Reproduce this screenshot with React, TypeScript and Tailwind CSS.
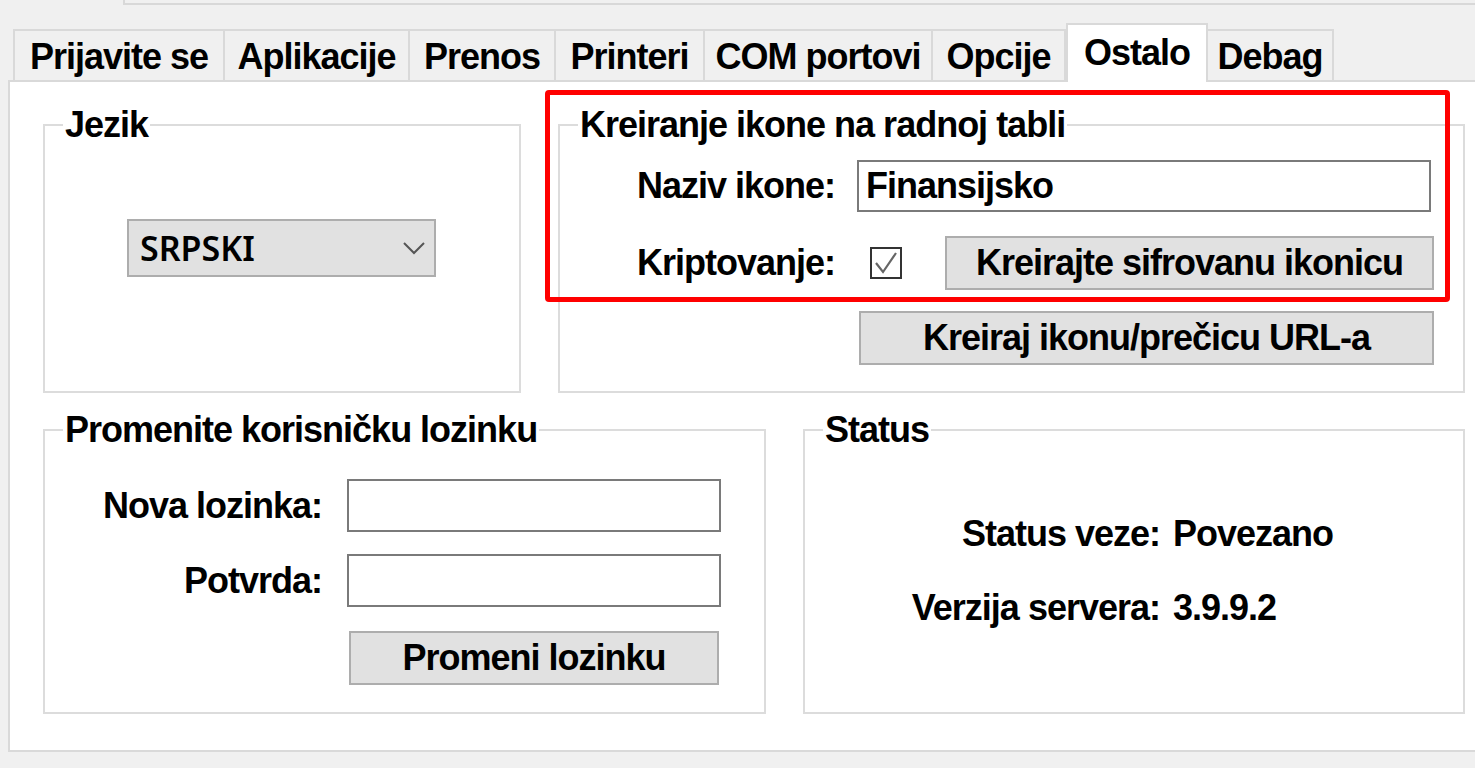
import React from 'react'

const TABS = [
  { label: 'Prijavite se', w: 'w-[212px]' },
  { label: 'Aplikacije', w: 'w-[185px]' },
  { label: 'Prenos', w: 'w-[146px]' },
  { label: 'Printeri', w: 'w-[149px]' },
  { label: 'COM portovi', w: 'w-[228px]' },
  { label: 'Opcije', w: 'w-[133px]' },
  { label: 'Ostalo', w: 'w-[142px]', active: true },
  { label: 'Debag', w: 'w-[126px]' },
]

function Group({ title, className, children }: { title: string; className: string; children?: React.ReactNode }) {
  return (
    <fieldset className={`border-2 border-[#dcdcdc] ${className}`}>
      <legend className="ml-[18px] px-[2px] leading-[40px]">{title}</legend>
      {children}
    </fieldset>
  )
}

function Btn({ label, className }: { label: string; className: string }) {
  return (
    <div className={`flex items-center justify-center bg-[#e1e1e1] border-2 border-[#adadad] ${className}`}>
      {label}
    </div>
  )
}

function TextBox({ value, className }: { value?: string; className: string }) {
  return (
    <div className={`flex items-center bg-white border-2 border-[#7a7a7a] pl-[7px] ${className}`}>
      {value}
    </div>
  )
}

export default function App() {
  return (
    <div className="relative w-[1475px] h-[768px] overflow-hidden bg-[#f0f0f0] text-black text-[36px] leading-[40px] font-bold tracking-[-1px] font-['Liberation_Sans',Arial,sans-serif]">
      {/* remains of the box above */}
      <div className="ml-[123px] h-[5px] border-l-2 border-b-2 border-[#d8d8d8]" />

      {/* tab strip */}
      <div className="mt-[18px] ml-[13px] flex items-end h-[57px]">
        {TABS.map((t) =>
          t.active ? (
            <div
              key={t.label}
              className={`${t.w} relative z-10 -mb-[2px] h-[59px] bg-white border-2 border-b-0 border-[#d9d9d9] flex items-start justify-center pt-[8px]`}
            >
              {t.label}
            </div>
          ) : (
            <div
              key={t.label}
              className={`${t.w} h-[51px] bg-[#f0f0f0] border-2 border-l-0 first:border-l-2 border-b-0 border-[#d9d9d9] flex items-center justify-center pt-[2px]`}
            >
              {t.label}
            </div>
          )
        )}
      </div>

      {/* panel */}
      <div className="ml-[8px] w-[1480px] h-[672px] bg-white border-2 border-[#d9d9d9] pl-[33px] pt-[23px]">
        <div className="flex gap-[37px]">
          <Group title="Jezik" className="w-[478px] h-[288px]">
            <div className="ml-[82px] mt-[74px] w-[309px] h-[58px] bg-[#e1e1e1] border-2 border-[#adadad] flex items-center justify-between pl-[11px] pr-[8px] font-['Noto_Sans',sans-serif] font-semibold tracking-normal text-[34px]">
              <span>SRPSKI</span>
              <svg width="24" height="14" viewBox="0 0 24 14" fill="none" stroke="#555" strokeWidth="2">
                <polyline points="2,2 12,12 22,2" />
              </svg>
            </div>
          </Group>

          <Group title="Kreiranje ikone na radnoj tabli" className="w-[907px] h-[288px]">
            <div className="flex items-center mt-[15px]">
              <div className="w-[275px] text-right">Naziv ikone:</div>
              <TextBox value="Finansijsko" className="ml-[22px] w-[574px] h-[52px]" />
            </div>
            <div className="flex items-center mt-[24px]">
              <div className="w-[275px] text-right">Kriptovanje:</div>
              <div className="ml-[35px] w-[32px] h-[32px] border-2 border-[#333] bg-white flex items-center justify-center">
                <svg width="26" height="26" viewBox="0 0 26 26" fill="none" stroke="#666" strokeWidth="2.2">
                  <polyline points="3,13 10,22 23,3" />
                </svg>
              </div>
              <Btn label="Kreirajte sifrovanu ikonicu" className="ml-[43px] w-[489px] h-[54px]" />
            </div>
            <div className="flex mt-[21px]">
              <Btn label="Kreiraj ikonu/prečicu URL-a" className="ml-[299px] w-[575px] h-[54px]" />
            </div>
          </Group>
        </div>

        <div className="flex gap-[37px] mt-[17px]">
          <Group title="Promenite korisničku lozinku" className="w-[723px] h-[304px]">
            <div className="flex items-center mt-[29px]">
              <div className="w-[277px] text-right">Nova lozinka:</div>
              <TextBox className="ml-[25px] w-[374px] h-[53px]" />
            </div>
            <div className="flex items-center mt-[22px]">
              <div className="w-[277px] text-right">Potvrda:</div>
              <TextBox className="ml-[25px] w-[374px] h-[53px]" />
            </div>
            <div className="flex mt-[24px]">
              <Btn label="Promeni lozinku" className="ml-[304px] w-[370px] h-[54px]" />
            </div>
          </Group>

          <Group title="Status" className="w-[662px] h-[304px]">
            <div className="grid grid-cols-[355px_1fr] gap-x-[13px] gap-y-[34px] mt-[64px]">
              <div className="text-right">Status veze:</div>
              <div>Povezano</div>
              <div className="text-right">Verzija servera:</div>
              <div>3.9.9.2</div>
            </div>
          </Group>
        </div>
      </div>

      {/* red highlight annotation */}
      <div className="absolute left-[545px] top-[90px] w-[905px] h-[212px] border-[5px] border-[#ff0000] rounded-[4px] pointer-events-none" />
    </div>
  )
}
